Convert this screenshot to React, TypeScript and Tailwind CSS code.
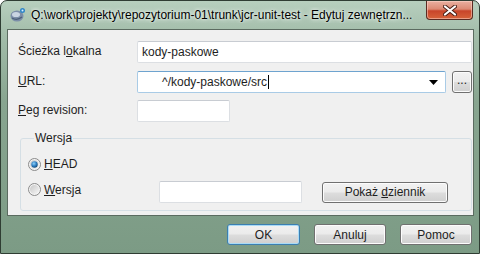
import React from "react";

const font = "font-['Segoe_UI','Liberation_Sans',Arial,sans-serif]";

function Radio({ checked }: { checked?: boolean }) {
  return (
    <svg width="13" height="13" viewBox="0 0 13 13" className="shrink-0">
      <defs>
        <linearGradient id={checked ? "rbc" : "rbu"} x1="0" y1="0" x2="1" y2="1">
          <stop offset="0" stopColor="#c8c8c8" />
          <stop offset="1" stopColor="#f6f6f6" />
        </linearGradient>
        <radialGradient id="dot" cx="0.4" cy="0.35" r="0.7">
          <stop offset="0" stopColor="#8fd2f7" />
          <stop offset="0.55" stopColor="#2f7fc4" />
          <stop offset="1" stopColor="#10456f" />
        </radialGradient>
      </defs>
      <circle cx="6.5" cy="6.5" r="6" fill="#f4f4f4" stroke="#8a8a8a" />
      <circle cx="6.5" cy="6.5" r="4.5" fill={`url(#${checked ? "rbc" : "rbu"})`} />
      {checked && <circle cx="6.5" cy="6.5" r="3.2" fill="url(#dot)" />}
    </svg>
  );
}

function Btn({ children, primary, className = "" }: { children: React.ReactNode; primary?: boolean; className?: string }) {
  return (
    <button
      className={`flex items-center justify-center rounded-[3px] border text-[12px] text-[#1e1e1e] bg-[linear-gradient(to_bottom,#f2f2f2_0%,#ebebeb_48%,#dddddd_52%,#cfcfcf_100%)] ${
        primary ? "border-[#3c7fb1] shadow-[inset_0_0_0_1px_#a9dbf6]" : "border-[#707070] shadow-[inset_0_0_0_1px_#fcfcfc]"
      } ${className}`}
    >
      {children}
    </button>
  );
}

export default function App() {
  return (
    <div
      className={`relative flex h-[254px] w-[480px] flex-col overflow-hidden rounded-t-[7px] border border-[#2f3d33] bg-[linear-gradient(to_bottom,#b7cfbe_0%,#a2bca9_14%,#88a590_40%,#7c9b85_100%)] ${font}`}
    >
      {/* title bar */}
      <div className="flex h-[28px] shrink-0 items-start">
        <div className="ml-[9px] mt-[6px] h-[16px] w-[16px] shrink-0">
          <svg width="16" height="16" viewBox="0 0 16 16">
            <ellipse cx="7" cy="9" rx="6.5" ry="5.5" fill="#7b8ea8" />
            <ellipse cx="6" cy="7.5" rx="4" ry="2.6" fill="#c9d4e2" />
            <path d="M2 11 q5 3 10 -1" stroke="#4c5e78" strokeWidth="1.2" fill="none" />
            <circle cx="12.5" cy="3.5" r="2.5" fill="#2f86c8" />
            <circle cx="12.5" cy="3.5" r="1" fill="#d9efff" />
          </svg>
        </div>
        <div className="ml-[5px] mt-[6px] min-w-0 flex-1 overflow-hidden whitespace-nowrap text-[12px] leading-[16px] text-black [text-shadow:0_0_6px_#eef5ef,0_0_3px_#ffffff]">
          Q:\work\projekty\repozytorium-01\trunk\jcr-unit-test - Edytuj zewnętrzn...
        </div>
        <div className="ml-[3px] mr-[6px] flex h-[19px] w-[47px] shrink-0 items-center justify-center rounded-b-[4px] border border-t-0 border-[#5a2b22] bg-[linear-gradient(to_bottom,#eab0a1_0%,#dc8a74_45%,#c8452a_55%,#d6633a_100%)] shadow-[inset_0_0_0_1px_rgba(255,220,210,0.5)]">
          <svg width="14" height="11" viewBox="0 0 14 11">
            <path d="M2 1.5 L12 9.5 M12 1.5 L2 9.5" stroke="#4a1f16" strokeWidth="4" strokeLinecap="round" />
            <path d="M2 1.5 L12 9.5 M12 1.5 L2 9.5" stroke="#ffffff" strokeWidth="2.2" strokeLinecap="round" />
          </svg>
        </div>
      </div>

      {/* client area */}
      <div className="ml-[6px] mr-[5px] flex h-[187px] shrink-0 flex-col border border-[#5b6b60] bg-[#f0f0f0] text-[12px] text-[#1e1e1e]">
        <div className="mt-[11px] flex h-[22px] items-center pl-[10px] pr-[1px]">
          <span className="w-[119px] shrink-0 pb-[3px]">
            Ścieżka l<u>o</u>kalna
          </span>
          <div className="flex h-full flex-1 items-center rounded-[2px] border border-[#dcdfe3] border-t-[#c8ccd2] bg-white pl-[4px]">
            kody-paskowe
          </div>
        </div>

        <div className="mt-[8px] flex h-[22px] items-center pl-[10px] pr-[1px]">
          <span className="w-[119px] shrink-0 pb-[3px]">
            <u>U</u>RL:
          </span>
          <div className="flex h-full w-[309px] shrink-0 items-center rounded-[2px] border border-[#a9cbe6] border-t-[#6ea3cf] bg-white pl-[24px] pr-[7px]">
            <span>^/kody-paskowe/src</span>
            <span className="ml-[1px] h-[14px] w-px bg-black" />
            <span className="flex-1" />
            <svg width="9" height="5" viewBox="0 0 9 5">
              <path d="M0 0 H9 L4.5 5 Z" fill="#000" />
            </svg>
          </div>
          <Btn className="ml-[6px] h-[22px] w-[20px] pb-[4px] text-[#1a1a7a]">...</Btn>
        </div>

        <div className="mt-[7px] flex h-[22px] items-center pl-[10px]">
          <span className="w-[119px] shrink-0 pb-[3px]">
            <u>P</u>eg revision:
          </span>
          <div className="h-full w-[93px] rounded-[2px] border border-[#dcdfe3] border-t-[#c8ccd2] bg-white" />
        </div>

        <fieldset className="ml-[12px] mr-[1px] mt-[9px] rounded-[3px] border border-[#d5dfe5] pb-[7px] pl-[7px] pr-[23px]">
          <legend className="ml-[6px] px-[1px] leading-[14px]">Wersja</legend>
          <div className="mt-[11px] flex h-[16px] items-center">
            <Radio checked />
            <span className="ml-[3px]">
              <u>H</u>EAD
            </span>
          </div>
          <div className="mt-[9px] flex h-[22px] items-center">
            <div className="flex w-[131px] shrink-0 items-center pb-[5px]">
              <Radio />
              <span className="ml-[3px]">
                <u>W</u>ersja
              </span>
            </div>
            <div className="h-full w-[143px] shrink-0 rounded-[2px] border border-[#dcdfe3] border-t-[#c8ccd2] bg-white" />
            <span className="flex-1" />
            <Btn className="h-[21px] w-[126px]">
              Pokaż&nbsp;<u>d</u>ziennik
            </Btn>
          </div>
        </fieldset>
      </div>

      {/* buttons */}
      <div className="mt-[8px] flex justify-end gap-[14px] pr-[7px]">
        <Btn primary className="h-[21px] w-[73px]">
          OK
        </Btn>
        <Btn className="h-[21px] w-[72px]">Anuluj</Btn>
        <Btn className="h-[21px] w-[72px]">Pomoc</Btn>
      </div>
    </div>
  );
}
